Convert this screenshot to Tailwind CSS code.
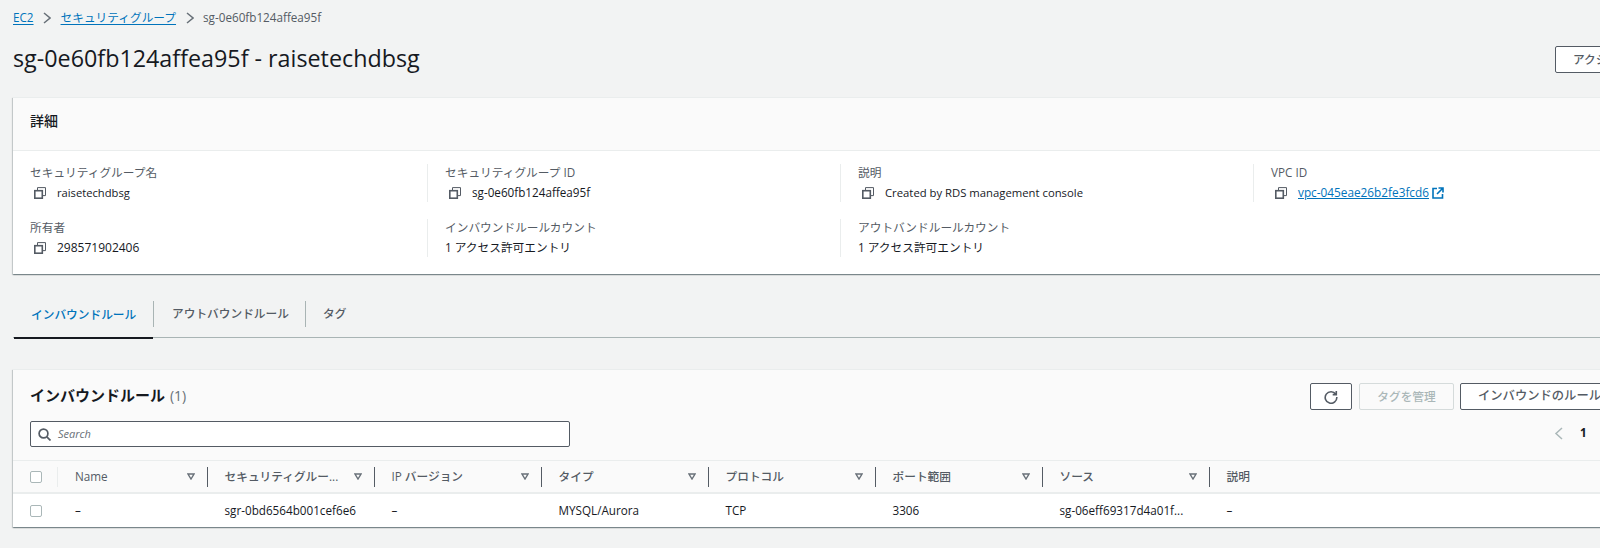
<!DOCTYPE html>
<html lang="ja">
<head>
  <meta charset="UTF-8" />
  <title>sg-0e60fb124affea95f - raisetechdbsg</title>
  <script src="https://cdn.jsdelivr.net/npm/@tailwindcss/browser@4"></script>
</head>
<body class="bg-[#f2f3f3] h-[548px] w-[1600px] overflow-hidden font-['Open_Sans','Noto_Sans_CJK_JP',sans-serif] text-[#16191f] text-[11.7px]">
  <div class="w-[1720px] pl-[13px]">

    <!-- breadcrumb -->
    <nav class="h-[34px] pt-[1px] flex items-center gap-[9.5px] leading-none">
      <a class="text-[#0073bb] underline underline-offset-2">EC2</a>
      <svg class="w-[8px] h-[12px]" viewBox="0 0 8 12" fill="none" stroke="#687078" stroke-width="1.5"><path d="M1 1l6 5-6 5" /></svg>
      <a class="text-[#0073bb] underline underline-offset-2">セキュリティグループ</a>
      <svg class="w-[8px] h-[12px]" viewBox="0 0 8 12" fill="none" stroke="#687078" stroke-width="1.5"><path d="M1 1l6 5-6 5" /></svg>
      <span class="text-[#545b64] font-medium">sg-0e60fb124affea95f</span>
    </nav>

    <!-- page header -->
    <div class="h-[63px] flex items-center justify-between pb-[12px]">
      <h1 class="text-[23.3px] leading-none mb-[2px]">sg-0e60fb124affea95f - raisetechdbsg</h1>
      <button class="w-[100px] h-[27px] mr-[65px] bg-white border border-[#545b64] rounded-[2px] text-left pl-[17px] font-medium text-[#545b64]">アクション</button>
    </div>

    <!-- details card -->
    <section class="bg-white shadow-[0_1px_1px_0_rgba(0,28,36,0.3),1px_1px_1px_0_rgba(0,28,36,0.15),-1px_1px_1px_0_rgba(0,28,36,0.15)] border-t border-[#eaeded]">
      <div class="h-[53px] pl-[17px] pb-[8px] flex items-center bg-[#fafafa] border-b border-[#eaeded] text-[14px] font-medium">詳細</div>
      <div class="grid grid-cols-[414px_413px_413px_413px] pt-[13px] pb-[17px] gap-y-[17px]">
        <div class="pl-[17px] h-[38px]">
          <div class="text-[#545b64] leading-[17px]">セキュリティグループ名</div>
          <div class="flex items-center gap-[11px] pl-[4px] mt-[3px] leading-[17px]">
            <svg class="w-[12px] h-[12px]" viewBox="0 0 12 12" fill="none" stroke="#545b64"><path d="M3.5 3V.6h8v8H8.5" /><rect x=".8" y="3.7" width="7.5" height="7.5" stroke-width="1.6" /></svg>
            <span class="text-[11.2px]">raisetechdbsg</span>
          </div>
        </div>
        <div class="pl-[17px] h-[38px] border-l border-[#eaeded]">
          <div class="text-[#545b64] leading-[17px]">セキュリティグループ ID</div>
          <div class="flex items-center gap-[11px] pl-[4px] mt-[3px] leading-[17px]">
            <svg class="w-[12px] h-[12px]" viewBox="0 0 12 12" fill="none" stroke="#545b64"><path d="M3.5 3V.6h8v8H8.5" /><rect x=".8" y="3.7" width="7.5" height="7.5" stroke-width="1.6" /></svg>
            <span class="text-[11.7px]">sg-0e60fb124affea95f</span>
          </div>
        </div>
        <div class="pl-[17px] h-[38px] border-l border-[#eaeded]">
          <div class="text-[#545b64] leading-[17px]">説明</div>
          <div class="flex items-center gap-[11px] pl-[4px] mt-[3px] leading-[17px]">
            <svg class="w-[12px] h-[12px]" viewBox="0 0 12 12" fill="none" stroke="#545b64"><path d="M3.5 3V.6h8v8H8.5" /><rect x=".8" y="3.7" width="7.5" height="7.5" stroke-width="1.6" /></svg>
            <span class="text-[11.3px]">Created by RDS management console</span>
          </div>
        </div>
        <div class="pl-[17px] h-[38px] border-l border-[#eaeded]">
          <div class="text-[#545b64] leading-[17px]">VPC ID</div>
          <div class="flex items-center gap-[11px] pl-[4px] mt-[3px] leading-[17px]">
            <svg class="w-[12px] h-[12px]" viewBox="0 0 12 12" fill="none" stroke="#545b64"><path d="M3.5 3V.6h8v8H8.5" /><rect x=".8" y="3.7" width="7.5" height="7.5" stroke-width="1.6" /></svg>
            <a class="text-[#0073bb] underline text-[11.8px]">vpc-045eae26b2fe3fcd6</a>
            <svg class="w-[12px] h-[12px] -ml-[8px]" viewBox="0 0 12 12" fill="none" stroke="#0073bb" stroke-width="1.6"><path d="M5 1.5H1v9.5h9.5V7M6.5 1H11v4.5M11 1L5 7" /></svg>
          </div>
        </div>
        <div class="pl-[17px] h-[38px]">
          <div class="text-[#545b64] leading-[17px]">所有者</div>
          <div class="flex items-center gap-[11px] pl-[4px] mt-[3px] leading-[17px]">
            <svg class="w-[12px] h-[12px]" viewBox="0 0 12 12" fill="none" stroke="#545b64"><path d="M3.5 3V.6h8v8H8.5" /><rect x=".8" y="3.7" width="7.5" height="7.5" stroke-width="1.6" /></svg>
            <span class="text-[12px]">298571902406</span>
          </div>
        </div>
        <div class="pl-[17px] h-[38px] border-l border-[#eaeded]">
          <div class="text-[#545b64] leading-[17px]">インバウンドルールカウント</div>
          <div class="mt-[3px] leading-[17px]">1 アクセス許可エントリ</div>
        </div>
        <div class="pl-[17px] h-[38px] border-l border-[#eaeded]">
          <div class="text-[#545b64] leading-[17px]">アウトバンドルールカウント</div>
          <div class="mt-[3px] leading-[17px]">1 アクセス許可エントリ</div>
        </div>
        <div></div>
      </div>
    </section>

    <!-- tabs -->
    <div class="mt-[26px] h-[38px] flex border-b border-[#a9b4b4] text-[#545b64] font-medium">
      <div class="w-[139px] ml-[1px] -mb-[1px] pl-[17px] pt-[1px] h-[39px] border-b-2 border-[#16191f] text-[#0073bb] leading-[26px]">インバウンドルール</div>
      <div class="h-[26px] mt-[1px] pl-[18px] w-[152px] border-l border-[#a9b4b4] leading-[24px]">アウトバウンドルール</div>
      <div class="h-[26px] mt-[1px] pl-[17px] border-l border-[#a9b4b4] leading-[24px]">タグ</div>
    </div>

    <!-- rules table card -->
    <section class="mt-[31px] bg-[#fafafa] border-t border-[#eaeded] shadow-[0_1px_1px_0_rgba(0,28,36,0.3),1px_1px_1px_0_rgba(0,28,36,0.15),-1px_1px_1px_0_rgba(0,28,36,0.15)]">
      <div class="h-[91px] pl-[17px] pr-[20px] pt-[12px] flex justify-between border-b border-[#eaeded]">
        <div>
          <h2 class="text-[15px] font-bold leading-[26px]">インバウンドルール <span class="text-[#687078] font-normal text-[14px] ml-[1px]">(1)</span></h2>
          <div class="mt-[12px] w-[540px] h-[26px] bg-white border border-[#545b64] rounded-[2px] flex items-center pl-[7px] gap-[7px]">
            <svg class="w-[13px] h-[13px]" viewBox="0 0 13 13" fill="none" stroke="#545b64" stroke-width="1.7"><circle cx="5.5" cy="5.5" r="4.4" /><path d="M8.8 8.8L12.5 12.5" /></svg>
            <span class="italic text-[#687078] text-[11px]">Search</span>
          </div>
        </div>
        <div class="flex flex-col items-start w-[390px] pt-[1px]">
          <div class="flex gap-[7px]">
            <button class="w-[42px] h-[27px] bg-white border border-[#545b64] rounded-[2px] flex items-center justify-center">
              <svg class="w-[14px] h-[14px]" viewBox="0 0 14 14" fill="none" stroke="#545b64" stroke-width="1.6"><path d="M11.8 4.2A5.8 5.8 0 1 0 12.8 7M12.3 1v3.6H8.7" /></svg>
            </button>
            <button class="w-[95px] h-[27px] border border-[#d5dbdb] rounded-[2px] text-[#aab7b8] font-medium">タグを管理</button>
            <button class="w-[200px] h-[27px] -ml-[1px] bg-white border border-[#545b64] rounded-[2px] text-[#545b64] font-medium text-[12.3px] text-left pl-[17px] whitespace-nowrap overflow-hidden">インバウンドのルールを編集</button>
          </div>
          <div class="flex items-center gap-[16px] mt-[13px] ml-[244px] h-[20px]">
            <svg class="w-[10px] h-[13px]" viewBox="0 0 10 13" fill="none" stroke="#aab7b8" stroke-width="1.5"><path d="M8 1L2 6.5 8 12" /></svg>
            <span class="font-bold text-[#16191f]">1</span>
          </div>
        </div>
      </div>

      <!-- header row -->
      <div class="h-[33px] flex items-center border-b-2 border-[#eaeded] text-[#545b64] font-medium">
        <div class="w-[45px] pl-[17px] h-[20px] border-r border-[#eaeded] flex items-center">
          <span class="block w-[12px] h-[12px] bg-white border border-[#aab7b8] rounded-[2px]"></span>
        </div>
        <div class="w-[149.5px] h-[20px] pl-[17px] pr-[12px] border-r border-[#545b64] flex items-center justify-between">Name
          <svg class="w-[8px] h-[7px]" viewBox="0 0 8 7" fill="none" stroke="#687078" stroke-width="1.4"><path d="M1 1h6L4 6z" /></svg></div>
        <div class="w-[167px] h-[20px] pl-[17px] pr-[12px] border-r border-[#545b64] flex items-center justify-between">セキュリティグルー...
          <svg class="w-[8px] h-[7px]" viewBox="0 0 8 7" fill="none" stroke="#687078" stroke-width="1.4"><path d="M1 1h6L4 6z" /></svg></div>
        <div class="w-[167px] h-[20px] pl-[17px] pr-[12px] border-r border-[#545b64] flex items-center justify-between">IP バージョン
          <svg class="w-[8px] h-[7px]" viewBox="0 0 8 7" fill="none" stroke="#687078" stroke-width="1.4"><path d="M1 1h6L4 6z" /></svg></div>
        <div class="w-[167px] h-[20px] pl-[17px] pr-[12px] border-r border-[#545b64] flex items-center justify-between">タイプ
          <svg class="w-[8px] h-[7px]" viewBox="0 0 8 7" fill="none" stroke="#687078" stroke-width="1.4"><path d="M1 1h6L4 6z" /></svg></div>
        <div class="w-[167px] h-[20px] pl-[17px] pr-[12px] border-r border-[#545b64] flex items-center justify-between">プロトコル
          <svg class="w-[8px] h-[7px]" viewBox="0 0 8 7" fill="none" stroke="#687078" stroke-width="1.4"><path d="M1 1h6L4 6z" /></svg></div>
        <div class="w-[167px] h-[20px] pl-[17px] pr-[12px] border-r border-[#545b64] flex items-center justify-between">ポート範囲
          <svg class="w-[8px] h-[7px]" viewBox="0 0 8 7" fill="none" stroke="#687078" stroke-width="1.4"><path d="M1 1h6L4 6z" /></svg></div>
        <div class="w-[167px] h-[20px] pl-[17px] pr-[12px] border-r border-[#545b64] flex items-center justify-between">ソース
          <svg class="w-[8px] h-[7px]" viewBox="0 0 8 7" fill="none" stroke="#687078" stroke-width="1.4"><path d="M1 1h6L4 6z" /></svg></div>
        <div class="pl-[17px]">説明</div>
      </div>

      <!-- data row -->
      <div class="h-[33px] bg-white flex items-center">
        <div class="w-[45px] pl-[17px] flex items-center">
          <span class="block w-[12px] h-[12px] bg-white border border-[#aab7b8] rounded-[2px]"></span>
        </div>
        <div class="w-[149.5px] pl-[17px]">–</div>
        <div class="w-[167px] pl-[17px]">sgr-0bd6564b001cef6e6</div>
        <div class="w-[167px] pl-[17px]">–</div>
        <div class="w-[167px] pl-[17px]">MYSQL/Aurora</div>
        <div class="w-[167px] pl-[17px]">TCP</div>
        <div class="w-[167px] pl-[17px]">3306</div>
        <div class="w-[167px] pl-[17px]">sg-06eff69317d4a01f...</div>
        <div class="pl-[17px]">–</div>
      </div>
    </section>
  </div>
</body>
</html>
